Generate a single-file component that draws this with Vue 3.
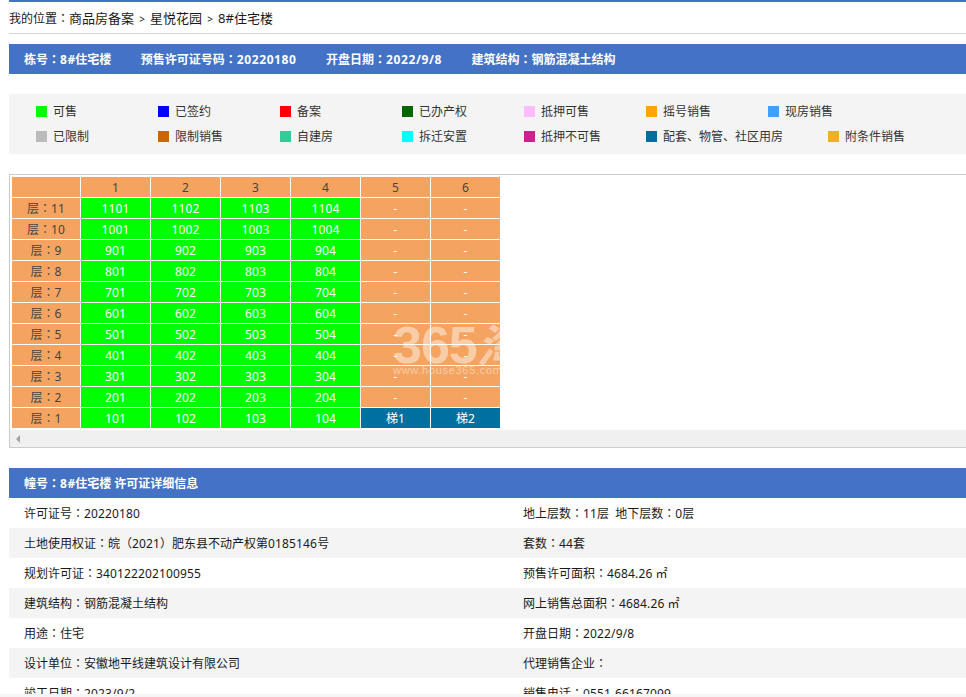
<script setup>
import { h } from 'vue'

// Text with centred full-width colons and slightly wider digit runs.
const T = (props) =>
  props.s.split(/(：|[0-9][0-9./-]*)/).filter(Boolean).map((p) => {
    if (p === '：') return h('span', { class: 'colon' }, p)
    if (/^[0-9]/.test(p)) return h('span', { class: 'num' }, p)
    return p
  })
T.props = ['s']

const legendRows = [
  [
    { label: '可售', color: '#00ff00' },
    { label: '已签约', color: '#0000ff' },
    { label: '备案', color: '#ff0000' },
    { label: '已办产权', color: '#006600' },
    { label: '抵押可售', color: '#ffbbff' },
    { label: '摇号销售', color: '#ffa500' },
    { label: '现房销售', color: '#3fa0ff' },
  ],
  [
    { label: '已限制', color: '#bbbbbb' },
    { label: '限制销售', color: '#cc6600' },
    { label: '自建房', color: '#33cc99' },
    { label: '拆迁安置', color: '#00ffff' },
    { label: '抵押不可售', color: '#d11f8f' },
    { label: '配套、物管、社区用房', color: '#0070a0', wide: true },
    { label: '附条件销售', color: '#f0b020' },
  ],
]
const floors = [11, 10, 9, 8, 7, 6, 5, 4, 3, 2, 1]
const rooms = (f) => [1, 2, 3, 4].map((u) => `${f}0${u}`)
const summary = ['栋号：8#住宅楼', '预售许可证号码：20220180', '开盘日期：2022/9/8', '建筑结构：钢筋混凝土结构']
const details = [
  ['许可证号：20220180', '地上层数：11层  地下层数：0层'],
  ['土地使用权证：皖（2021）肥东县不动产权第0185146号', '套数：44套'],
  ['规划许可证：340122202100955', '预售许可面积：4684.26 ㎡'],
  ['建筑结构：钢筋混凝土结构', '网上销售总面积：4684.26 ㎡'],
  ['用途：住宅', '开盘日期：2022/9/8'],
  ['设计单位：安徽地平线建筑设计有限公司', '代理销售企业：'],
  ['竣工日期：2023/9/2', '销售电话：0551-66167099'],
]
</script>

<template>
  <div class="page">
    <div class="crumb">
      <span class="lead"><T s="我的位置：" /></span><span>商品房备案</span><span class="sep">&gt;</span><span>星悦花园</span><span class="sep">&gt;</span><span>8#住宅楼</span>
    </div>
    <div class="bar summary">
      <span v-for="s in summary" :key="s"><T :s="s" /></span>
    </div>
    <div class="legend">
      <div v-for="(row, r) in legendRows" :key="r" class="legend-row">
        <div v-for="item in row" :key="item.label" class="legend-item" :class="{ wide: item.wide }">
          <i class="swatch" :style="{ background: item.color }"></i>{{ item.label }}
        </div>
      </div>
    </div>
    <div class="table-box">
      <div class="table-wrap">
        <table class="units">
          <colgroup>
            <col class="c0" />
            <col v-for="n in 6" :key="n" class="cn" />
          </colgroup>
          <tbody>
            <tr>
              <td class="o"></td>
              <td v-for="n in 6" :key="n" class="o">{{ n }}</td>
            </tr>
            <tr v-for="f in floors" :key="f">
              <td class="o"><T :s="`层：${f}`" /></td>
              <td v-for="u in rooms(f)" :key="u" class="g"><T :s="u" /></td>
              <template v-if="f === 1">
                <td class="b">梯1</td>
                <td class="b">梯2</td>
              </template>
              <template v-else>
                <td class="o w">-</td>
                <td class="o w">-</td>
              </template>
            </tr>
          </tbody>
        </table>
        <div class="mark">
          <div class="mark-big">365<span class="mark-cn">淘</span></div>
          <div class="mark-url">www.house365.com</div>
        </div>
      </div>
      <div class="scrollbar"><span class="arrow"></span></div>
    </div>
    <div class="bar detail-head"><T s="幢号：8#住宅楼 许可证详细信息" /></div>
    <div class="details">
      <div v-for="(row, i) in details" :key="i" class="d-row">
        <div class="d-cell"><T :s="row[0]" /></div>
        <div class="d-cell"><T :s="row[1]" /></div>
      </div>
    </div>
    <div class="fade"></div>
  </div>
</template>

<style>
html, body { margin: 0; height: 100%; overflow: hidden; background: #fff; }
.colon { font-family: "Noto Sans CJK TC", sans-serif; line-height: 0; }
.num { letter-spacing: 0.14px; }
.bar .num { letter-spacing: 0.6px; }
</style>

<style scoped>
.page {
  position: relative;
  height: 697px;
  width: 966px;
  overflow: hidden;
  box-sizing: border-box;
  padding-left: 9px;
  font-family: "Noto Sans", "Noto Sans CJK SC", sans-serif;
  font-size: 12px;
  color: #333;
}
.crumb {
  border-top: 2px solid #4472c4;
  border-bottom: 1px solid #d4d4d4;
  height: 31px;
  line-height: 33px;
  color: #1a1a1a;
  margin-right: -10px;
  font-size: 13px;
}
.lead { font-size: 12px; }
.sep { display: inline-block; width: 16px; text-align: center; font-size: 10px; }
.bar {
  background: #4472c4;
  color: #fff;
  font-weight: 700;
  height: 30px;
  line-height: 32px;
  padding-left: 15px;
  margin-right: -10px;
}
.summary { margin-top: 10px; display: flex; gap: 29.5px; }
.legend {
  margin-top: 20px;
  height: 60px;
  background: #f4f4f4;
  box-sizing: border-box;
  padding: 4px 0 0 27px;
  margin-right: -10px;
}
.legend-row { display: flex; height: 25px; align-items: center; }
.legend-item { width: 122px; flex: none; display: flex; align-items: center; white-space: nowrap; }
.legend-item.wide { width: 182px; }
.swatch { width: 11px; height: 11px; margin: 1px 6px 0 0; flex: none; }
.table-box {
  margin-top: 20px;
  margin-right: -10px;
  border: 1px solid #ccc;
  border-right: 0;
  height: 272px;
}
.table-wrap { position: relative; height: 255px; overflow: hidden; }
.units {
  border-collapse: separate;
  border-spacing: 1px;
  table-layout: fixed;
  width: 490px;
  margin: 1px 0 0 1px;
}
.c0 { width: 68px; }
.cn { width: 69px; }
.units td { height: 18px; padding: 2px 0 0; text-align: center; line-height: 18px; }
.o { background: #f4a460; color: #444; }
.w { color: #fff; }
.g { background: #00ff00; color: #fff; }
.b { background: #0070a0; color: #fff; }
.mark {
  position: absolute;
  left: 383px;
  top: 145px;
  width: 107px;
  overflow: hidden;
  color: rgba(255, 255, 255, 0.45);
  white-space: nowrap;
}
.mark-big { font: 700 52px/46px "Liberation Sans", sans-serif; letter-spacing: -1px; }
.mark-cn { font: italic 700 46px/46px "Noto Sans CJK SC", sans-serif; }
.mark-url { font: 11px/14px "Liberation Sans", sans-serif; letter-spacing: 0.7px; margin-top: -5px; }
.scrollbar { height: 17px; background: #f0f0f0; position: relative; }
.arrow {
  position: absolute;
  left: 6px;
  top: 5px;
  border: 4px solid transparent;
  border-left: 0;
  border-right: 4px solid #a3a3a3;
}
.detail-head { margin-top: 20px; }
.details { margin-right: -10px; }
.d-row { display: flex; height: 30px; line-height: 32px; color: #1a1a1a; }
.d-row:nth-child(even) { background: #f4f4f4; }
.d-cell { padding-left: 15px; width: 499px; box-sizing: border-box; flex: none; white-space: pre; }
.fade { position: absolute; left: 0; right: 0; bottom: 0; height: 3px; background: #f5f5f5; }
</style>
